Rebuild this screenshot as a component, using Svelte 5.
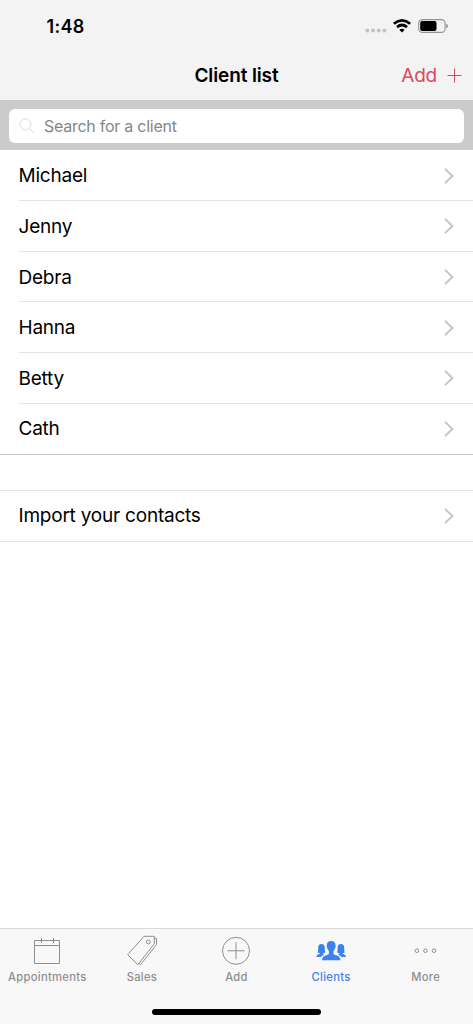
<script lang="ts">
	/**
	 * Client list screen
	 * Searchable list of clients with navigation bar and tab bar
	 */

	const clients = ['Michael', 'Jenny', 'Debra', 'Hanna', 'Betty', 'Cath'];

	const tabs = [
		{ id: 'appointments', label: 'Appointments' },
		{ id: 'sales', label: 'Sales' },
		{ id: 'add', label: 'Add' },
		{ id: 'clients', label: 'Clients' },
		{ id: 'more', label: 'More' }
	];

	let active = $state('clients');
	let query = $state('');

	const visible = $derived(
		clients.filter((name) => name.toLowerCase().includes(query.toLowerCase()))
	);
</script>

{#snippet chevron()}
	<svg class="chevron" width="10" height="16" viewBox="0 0 10 16" aria-hidden="true">
		<path d="M1 .9 8.4 8 1 15.1" />
	</svg>
{/snippet}

<div class="screen">
	<header>
		<div class="status">
			<span class="time">1:48</span>
			<div class="indicators">
				<svg class="signal" width="22" height="5" viewBox="0 0 22 5">
					<circle cx="2.3" cy="2.5" r="2" />
					<circle cx="8" cy="2.5" r="2" />
					<circle cx="13.7" cy="2.5" r="2" />
					<circle cx="19.4" cy="2.5" r="2" />
				</svg>
				<svg class="wifi" width="18" height="14" viewBox="0 0 18 14">
					<path d="M.8 4.8Q9-1.9 17.2 4.8" />
					<path d="M4 8.1Q9 3.9 14 8.1" />
					<path class="dot" d="M6.3 10.8Q9 8.6 11.7 10.8L9 13.6Z" />
				</svg>
				<svg class="battery" width="31" height="14" viewBox="0 0 31 14">
					<rect class="case" x=".7" y=".6" width="26.4" height="12.8" rx="3.7" />
					<rect x="2.2" y="2.1" width="16.3" height="9.8" rx="2" />
					<path class="cap" d="M28.2 4.8Q30 5.3 30 7T28.2 9.2Z" />
				</svg>
			</div>
		</div>
		<nav class="navbar">
			<h1>Client list</h1>
			<button class="add-client">
				<span>Add</span>
				<svg width="15" height="15" viewBox="0 0 15 15"><path d="M7.5 .5v14M.5 7.5h14" /></svg>
			</button>
		</nav>
	</header>

	<div class="search">
		<label class="field">
			<svg width="16" height="16" viewBox="0 0 16 16">
				<circle cx="6.4" cy="6.4" r="5.5" />
				<path d="m10.4 10.4 4.7 4.7" />
			</svg>
			<input type="text" placeholder="Search for a client" bind:value={query} />
		</label>
	</div>

	<main>
		<ul>
			{#each visible as name}
				<li><span>{name}</span>{@render chevron()}</li>
			{/each}
		</ul>
		<button class="import">
			<span>Import your contacts</span>
			{@render chevron()}
		</button>
	</main>

	<footer>
		<div class="tabs">
			{#each tabs as tab}
				<button class="tab" class:active={active === tab.id} onclick={() => (active = tab.id)}>
					<svg width="32" height="32" viewBox="0 0 32 32">
						{#if tab.id === 'appointments'}
							<path d="M3.5 5.5h25v23h-25ZM3.5 10.5h25M10.5 3v5M22.5 3v5" />
						{:else if tab.id === 'sales'}
							<path d="M18 1.3h10.3V8.8L11.8 29.7 1.7 19.7Z" />
							<path d="M28.3 3.4h2.2V9.6L14.5 29.7 12.8 28.5" />
							<circle cx="22.3" cy="6.9" r="1.9" />
						{:else if tab.id === 'add'}
							<circle cx="16" cy="15.8" r="13.5" />
							<path d="M16 7.3v17M7.5 15.8h17" />
						{:else if tab.id === 'clients'}
							<path
								class="person"
								d="M16.2 6c3 0 4.6 1.7 4.3 4.6.5.7.3 1.9-.4 2.4-.3 1.4-.8 2.4-1.6 3.1v2.2c0 1 .6 1.4 2.4 2 2.8.8 4.2 1.7 4.5 5H7c.3-3.3 1.7-4.2 4.500-5 1.8-.6 2.4-1 2.4-2v-2.2c-.8-.7-1.3-1.7-1.6-3.1-.7-.5-.9-1.7-.4-2.4C11.6 7.7 13.2 6 16.2 6Z"
							/>
							<path
								class="person"
								d="M6.5 9c2.2 0 3.3 1.4 3.3 3.9 0 1.8 0 3.3.4 4.7-.6.4-1.3.6-2.2.7 0 .9.3 1.2 1.3 1.5-1.7.6-2.7 1.2-3.3 2.2H1.4c.1-1.7.8-2.3 2.4-2.8 1-.3 1.2-.4 1.2-.9-.9-.1-1.6-.3-2.2-.7.4-1.4.4-2.9.4-4.7C3.2 10.4 4.3 9 6.5 9Z"
							/>
							<path
								class="person"
								d="M25.9 9c-2.2 0-3.3 1.4-3.3 3.9 0 1.8 0 3.3-.4 4.7.6.4 1.3.6 2.2.7 0 .9-.3 1.2-1.3 1.5 1.7.6 2.7 1.2 3.3 2.2H31c-.1-1.7-.8-2.3-2.4-2.8-1-.3-1.2-.4-1.2-.9.9-.1 1.6-.3 2.2-.7-.4-1.4-.4-2.9-.4-4.7C29.2 10.4 28.1 9 25.9 9Z"
							/>
						{:else}
							<circle cx="6.9" cy="15.7" r="1.8" />
							<circle cx="15.4" cy="15.7" r="1.8" />
							<circle cx="24" cy="15.7" r="1.8" />
						{/if}
					</svg>
					<span>{tab.label}</span>
				</button>
			{/each}
		</div>
		<div class="home"></div>
	</footer>
</div>

<style>
	:global(body) {
		margin: 0;
	}

	.screen {
		display: flex;
		flex-direction: column;
		height: 1024px;
		background: #fff;
		color: #000;
		font-family: Inter, 'Liberation Sans', sans-serif;
	}

	button {
		padding: 0;
		border: none;
		background: none;
		color: inherit;
		font: inherit;
		cursor: pointer;
	}

	svg {
		flex: none;
		fill: none;
		stroke: currentColor;
	}

	header {
		height: 100px;
		background: #f3f3f3;
	}

	/* Status bar */
	.status {
		display: flex;
		justify-content: space-between;
		height: 50px;
		padding: 0 25px 0 46.5px;
		box-sizing: border-box;
	}

	.time {
		padding-top: 15px;
		font-size: 18px;
		line-height: 23px;
		font-weight: 600;
		letter-spacing: 0.3px;
	}

	.indicators {
		display: flex;
		align-items: flex-start;
		padding-top: 19px;
	}

	.signal {
		margin: 9px 6px 0 0;
		fill: #c4c4c4;
		stroke: none;
	}

	.wifi {
		margin-right: 7px;
		stroke-width: 2.7;
	}

	.dot {
		fill: #000;
		stroke: none;
	}

	.battery {
		margin-right: -1px;
		fill: #000;
		stroke: none;
	}

	.case {
		fill: none;
		stroke: #929292;
		stroke-width: 1.1;
	}

	.cap {
		fill: #929292;
	}

	/* Navigation bar */
	.navbar {
		display: grid;
		grid-template-columns: 1fr auto 1fr;
		align-items: center;
		height: 50px;
		padding-right: 11px;
	}

	h1 {
		grid-column: 2;
		margin: 0 -11px 0 0;
		font-size: 19px;
		font-weight: 600;
		letter-spacing: -0.12px;
	}

	.add-client {
		display: flex;
		align-items: center;
		justify-self: end;
		gap: 10px;
		color: #dc4964;
		font-size: 19px;
		letter-spacing: -0.2px;
	}

	/* Search */
	.search {
		height: 50.4px;
		padding: 9px 9px 7.4px;
		box-sizing: border-box;
		background: #cbcbcb;
	}

	.field {
		display: flex;
		align-items: center;
		gap: 9px;
		height: 34px;
		padding: 0 10px;
		border-radius: 6px;
		background: #fff;
		color: #dadada;
	}

	input {
		flex: 1;
		padding: 0;
		border: none;
		outline: none;
		background: none;
		font: 16px Inter, 'Liberation Sans', sans-serif;
		letter-spacing: -0.26px;
	}

	input::placeholder {
		color: #858585;
	}

	/* List */
	main {
		flex: 1;
	}

	ul {
		margin: 0 0 35px;
		padding: 0;
		border-bottom: 1px solid #c6c6c6;
		list-style: none;
	}

	li,
	.import {
		display: flex;
		align-items: center;
		justify-content: space-between;
		height: 50.7px;
		padding-right: 19.5px;
		box-sizing: border-box;
		font-size: 19px;
		letter-spacing: -0.22px;
	}

	li {
		margin-left: 19px;
		padding-top: 1px;
		border-bottom: 1px solid #e5e5e7;
	}

	li:last-child {
		height: 50px;
		padding-top: 0;
		border-bottom: none;
	}

	.import {
		width: 100%;
		height: 52px;
		padding-left: 19px;
		border-top: 1px solid #e5e5e7;
		border-bottom: 1px solid #e5e5e7;
	}

	li span,
	.import span {
		margin-left: -0.5px;
	}

	.chevron {
		stroke: #c5c5c9;
		stroke-width: 2;
	}

	/* Tab bar */
	footer {
		height: 96px;
		box-sizing: border-box;
		border-top: 1px solid #dadada;
		background: #f8f8f8;
	}

	.tabs {
		display: grid;
		grid-template-columns: repeat(5, 1fr);
		height: 80px;
	}

	.tab {
		display: flex;
		flex-direction: column;
		align-items: center;
		padding-top: 6px;
		color: #8f8f8f;
		font-size: 11.2px;
		line-height: 14px;
		font-weight: 500;
		letter-spacing: 0.3px;
	}

	.tab span {
		margin-top: 3px;
	}

	.active {
		color: #3b82f0;
	}

	.person {
		fill: currentColor;
		stroke: none;
	}

	.home {
		width: 169px;
		height: 6px;
		margin: 0 auto;
		border-radius: 3px;
		background: #000;
	}
</style>
